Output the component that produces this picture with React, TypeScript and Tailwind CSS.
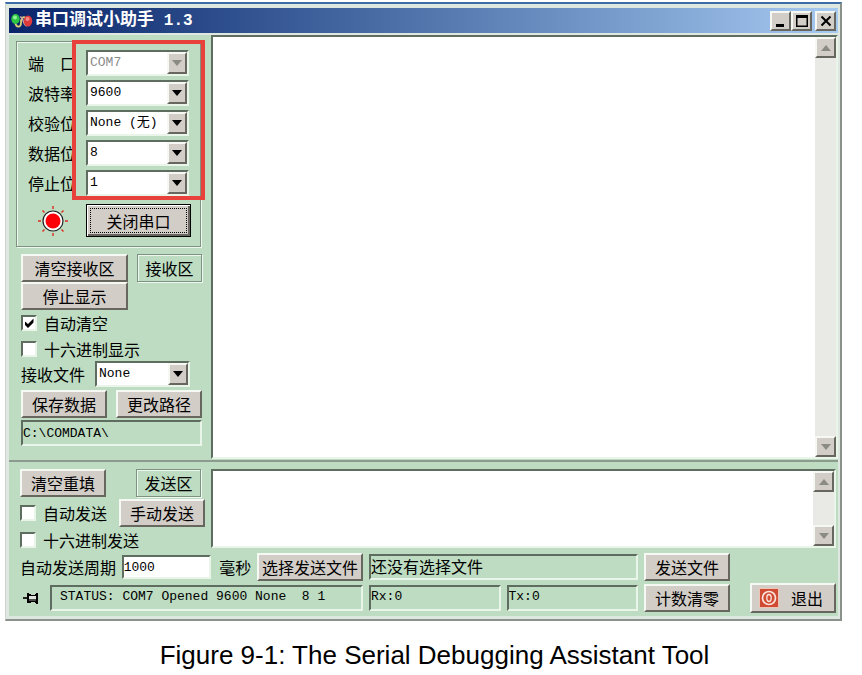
import type { ButtonHTMLAttributes, ReactNode } from "react";
import clsx from "clsx";

const raised =
  "border-2 border-t-[#f6f8f4] border-l-[#f6f8f4] border-r-[#67665f] border-b-[#67665f] bg-[#d3cdc7]";
const sunken =
  "border-2 border-t-[#5f6c60] border-l-[#5f6c60] border-r-[#eaf5ea] border-b-[#eaf5ea]";
const mono = "font-['Liberation_Mono','Noto_Sans_CJK_SC',monospace] text-[13px] leading-5";

function Btn({ className, children, ...rest }: ButtonHTMLAttributes<HTMLButtonElement>) {
  return (
    <button
      type="button"
      className={clsx(raised, "flex h-7 items-center justify-center whitespace-nowrap leading-5", className)}
      {...rest}
    >
      {children}
    </button>
  );
}

function Combo({ id, value, disabled, className }: { id: string; value: string; disabled?: boolean; className: string }) {
  return (
    <div className={clsx(sunken, "relative h-[26px] border-r-[#8a938b] border-b-[#8a938b] bg-white", className)}>
      <select
        id={id}
        disabled={disabled}
        defaultValue={value}
        className={clsx(
          mono,
          "block h-full w-full appearance-none bg-white pl-[2px] opacity-100",
          disabled ? "text-[#8b8b8b]" : "text-black"
        )}
      >
        <option>{value}</option>
      </select>
      <span className={clsx(raised, "pointer-events-none absolute right-0 top-0 flex h-full w-5 items-center justify-center")}>
        <svg viewBox="0 0 10 6" className="h-[6px] w-[10px]">
          <path d="M0 0h10L5 6z" fill={disabled ? "#8b8b85" : "#000"} />
        </svg>
      </span>
    </div>
  );
}

function Check({ label, checked }: { label: string; checked?: boolean }) {
  return (
    <label className="flex items-center gap-[7px] leading-5">
      <span className={clsx(sunken, "relative h-4 w-4 bg-white")}>
        <input type="checkbox" defaultChecked={checked} className="peer block h-3 w-3 appearance-none" />
        <svg viewBox="0 0 12 12" className="pointer-events-none absolute left-0 top-0 hidden h-3 w-3 peer-checked:block">
          <path d="M2 4.500v3.500L5 11l5.500-5.500V1.500L5 7z" fill="#000" />
        </svg>
      </span>
      {label}
    </label>
  );
}

function Tag({ children }: { children: ReactNode }) {
  return (
    <div className="flex h-7 w-[65px] items-center justify-center border border-[#7d9280] leading-5 shadow-[1px_1px_0_#eef8ee,inset_1px_1px_0_#eef8ee]">
      {children}
    </div>
  );
}

function ScrollBar() {
  return (
    <div className="flex w-[21px] flex-col justify-between bg-[#e9e9e6]">
      <Btn aria-label="Scroll up" className="h-[21px]! w-[21px]">
        <svg viewBox="0 0 10 6" className="h-[6px] w-[10px]">
          <path d="M0 6h10L5 0z" fill="#8b8b85" />
        </svg>
      </Btn>
      <Btn aria-label="Scroll down" className="h-[21px]! w-[21px]">
        <svg viewBox="0 0 10 6" className="h-[6px] w-[10px]">
          <path d="M0 0h10L5 6z" fill="#8b8b85" />
        </svg>
      </Btn>
    </div>
  );
}

const ports = [
  { id: "port", label: "端　口", value: "COM7", disabled: true },
  { id: "baud", label: "波特率", value: "9600" },
  { id: "parity", label: "校验位", value: "None (无)" },
  { id: "data", label: "数据位", value: "8" },
  { id: "stop", label: "停止位", value: "1" },
];

function TitleBar() {
  return (
    <header className="flex h-[25px] items-center bg-linear-to-r from-[#0a246a] to-[#a6caf0] pl-[2px] pr-[2px]">
      <svg viewBox="0 0 22 16" className="h-4 w-[22px]">
        <path d="M4 9c1 6 6 6 6 1s2-7 5-5" fill="none" stroke="#d6cf72" strokeWidth="1.800" />
        <path d="M9 4c4-1 2 8 7 9" fill="none" stroke="#c9a4a4" strokeWidth="1.500" />
        <ellipse cx="4.500" cy="6" rx="4.200" ry="5" fill="#2cc744" />
        <ellipse cx="4" cy="4.500" rx="2" ry="2" fill="#8ff095" />
        <ellipse cx="17" cy="8" rx="4.200" ry="5.500" fill="#dc3a3c" />
        <ellipse cx="16.500" cy="6" rx="2" ry="2" fill="#f28a86" />
      </svg>
      <h1 className="flex-1 pl-[2px] text-[17px] leading-5 font-bold text-white">
        串口调试小助手{" "}
        <span className="pl-[6px] font-['Liberation_Mono',monospace] text-base">1.3</span>
      </h1>
      <Btn aria-label="Minimize" className="h-5! w-[21px]">
        <svg viewBox="0 0 16 14" className="h-[14px] w-4">
          <path d="M3 10h8v3H3z" />
        </svg>
      </Btn>
      <Btn aria-label="Maximize" className="h-5! w-[21px]">
        <svg viewBox="0 0 16 14" className="h-[14px] w-4">
          <path d="M2 1h12v12H2zM3.500 4v7.500h9V4z" fillRule="evenodd" />
        </svg>
      </Btn>
      <Btn aria-label="Close" className="ml-[3px] h-5! w-[21px]">
        <svg viewBox="0 0 16 14" className="h-[14px] w-4">
          <path d="M3.500 2.500l9 9M12.500 2.500l-9 9" stroke="#000" strokeWidth="2" />
        </svg>
      </Btn>
    </header>
  );
}

function PortSettings() {
  return (
    <section className="relative h-[206px] border border-[#7d9280] pt-[6px] shadow-[1px_1px_0_#eef8ee,inset_1px_1px_0_#eef8ee]">
      {ports.map((p) => (
        <div key={p.id} className="flex h-[30px] items-center pl-[11px]">
          <label htmlFor={p.id} className="w-[58px] leading-5">
            {p.label}
          </label>
          <Combo id={p.id} value={p.value} disabled={p.disabled} className="w-[103px]" />
        </div>
      ))}
      <div className="mt-[6px] flex items-center pl-[20px]">
        <svg viewBox="0 0 32 32" className="h-8 w-8">
          <g stroke="#e02a20" strokeWidth="1.400">
            <path d="M16 1v3M16 28v3M1 16h3M28 16h3M5.500 5.500l2 2M24.500 24.500l2 2M5.500 26.500l2-2M24.500 7.500l2-2" />
          </g>
          <circle cx="16" cy="16" r="10" fill="#fff" stroke="#222" strokeWidth="1.200" />
          <circle cx="16" cy="16" r="7.500" fill="#fb0006" />
        </svg>
        <button
          type="button"
          className="ml-[17px] h-[33px] w-[105px] border border-black bg-[#d3cdc7] p-[3px] shadow-[inset_1px_1px_0_#fff,inset_-2px_-2px_0_#67665f]"
        >
          <span className="flex h-full items-center justify-center border border-dotted border-black leading-5">关闭串口</span>
        </button>
      </div>
      <div className="pointer-events-none absolute -top-[2px] left-[55px] h-[160px] w-[133px] border-4 border-[#e8403a]" />
    </section>
  );
}

function ReceivePanel() {
  return (
    <aside className="w-[202px] shrink-0 pl-[7px] pt-[6px]">
      <div className="w-[185px]">
        <PortSettings />
      </div>
      <div className="mt-[7px] flex w-[186px] justify-between pl-[5px]">
        <div>
          <Btn className="w-[107px]">清空接收区</Btn>
          <Btn className="w-[107px]">停止显示</Btn>
        </div>
        <Tag>接收区</Tag>
      </div>
      <div className="pl-[5px]">
        <div className="flex h-[26px] items-center">
          <Check label="自动清空" checked />
        </div>
        <div className="flex h-[26px] items-center">
          <Check label="十六进制显示" />
        </div>
        <div className="flex h-6 items-center">
          <label htmlFor="rxfile" className="w-[74px] leading-5">
            接收文件
          </label>
          <Combo id="rxfile" value="None" className="w-[95px]" />
        </div>
        <div className="mt-1 flex w-[181px] justify-between">
          <Btn className="w-[86px]">保存数据</Btn>
          <Btn className="w-[86px]">更改路径</Btn>
        </div>
        <input
          aria-label="路径"
          readOnly
          value="C:\COMDATA\"
          className={clsx(sunken, mono, "mt-[2px] block h-[26px] w-[181px] bg-transparent")}
        />
      </div>
    </aside>
  );
}

function SendPanel() {
  return (
    <section className="pl-[11px] pr-[2px] pt-[7px] pb-[3px]">
      <div className="flex">
        <div className="w-[191px] shrink-0">
          <div className="flex w-[181px] justify-between">
            <Btn className="w-[86px]">清空重填</Btn>
            <Tag>发送区</Tag>
          </div>
          <div className="mt-[2px] flex w-[185px] items-center justify-between">
            <Check label="自动发送" />
            <Btn className="w-[86px]">手动发送</Btn>
          </div>
          <div className="flex h-[26px] items-center">
            <Check label="十六进制发送" />
          </div>
        </div>
        <div className={clsx(sunken, "flex h-[79px] flex-1 bg-white")}>
          <textarea aria-label="发送区" className="min-w-0 flex-1 resize-none outline-none" />
          <ScrollBar />
        </div>
      </div>
      <div className="grid grid-cols-[343px_1fr_86px_100px] items-center gap-x-[6px] gap-y-[2px]">
        <div className="flex items-center justify-between">
          <label htmlFor="period" className="leading-5">
            自动发送周期
          </label>
          <input
            id="period"
            defaultValue="1000"
            className={clsx(sunken, mono, "h-6 w-[89px] bg-white")}
          />
          <span className="pl-[3px] leading-5">毫秒</span>
          <Btn className="w-[106px]">选择发送文件</Btn>
        </div>
        <div className={clsx(sunken, "h-[26px] leading-5")}>还没有选择文件</div>
        <Btn className="w-full">发送文件</Btn>
        <span />

        <div className="flex items-center justify-between">
          <svg viewBox="0 0 18 14" className="ml-[2px] h-[14px] w-[18px]">
            <path d="M1 6h5v2H1z" fill="#222" />
            <path d="M7 4h8v5H7z" fill="#dfe3de" />
            <path d="M7 8h8v3H7z" fill="#4a4f4a" />
            <path d="M5 2h2v10H5zM14 2h2v11h-2zM7 3h2v1h4V3h1v2H7zM7 10h7v2h-1v-1H9v1H7z" fill="#000" />
          </svg>
          <div className={clsx(sunken, mono, "h-[26px] w-[313px] whitespace-pre pl-2")}>
            {"STATUS: COM7 Opened 9600 None  8 1"}
          </div>
        </div>
        <div className="grid grid-cols-2 gap-[6px]">
          <div className={clsx(sunken, mono, "h-[26px]")}>Rx:0</div>
          <div className={clsx(sunken, mono, "h-[26px]")}>Tx:0</div>
        </div>
        <Btn className="w-full">计数清零</Btn>
        <Btn className="h-[30px]! w-[86px] justify-self-end gap-3 pr-1">
          <svg viewBox="0 0 20 20" className="h-5 w-5">
            <path d="M0 0h20v20H0z" fill="#f1c5b5" />
            <path d="M1 1h18v18H1z" fill="#cf4b34" />
            <circle cx="10" cy="10" r="6.500" fill="none" stroke="#fbe3da" strokeWidth="1.700" />
            <ellipse cx="10" cy="10" rx="2.200" ry="3.500" fill="none" stroke="#fbe3da" strokeWidth="1.300" />
          </svg>
          退出
        </Btn>
      </div>
    </section>
  );
}

export default function App() {
  return (
    <main className="bg-white pl-[5px] pr-5 pt-[2px] font-['Noto_Sans_CJK_SC',sans-serif] text-base text-black">
      <div className="border-t-2 border-r-2 border-b-2 border-l border-t-[#3a6ea5] border-r-[#8b918b] border-b-[#8b918b] border-l-[#cfd3cf] bg-[#dfe8e0] pt-1 pr-[2px] pb-[3px] pl-[3px]">
        <TitleBar />
        <div className="mt-[2px] bg-[#bddcc1]">
          <div className="flex border-b-2 border-b-[#8d9b8e] pb-px">
            <ReceivePanel />
            <div className={clsx(sunken, "flex h-[424px] flex-1 bg-white")}>
              <textarea aria-label="接收区" readOnly className="min-w-0 flex-1 resize-none outline-none" />
              <ScrollBar />
            </div>
          </div>
          <SendPanel />
        </div>
      </div>
      <p className="pt-[18px] pl-[22px] text-center font-['Liberation_Sans',sans-serif] text-[26px] leading-8">
        Figure 9-1: The Serial Debugging Assistant Tool
      </p>
    </main>
  );
}
